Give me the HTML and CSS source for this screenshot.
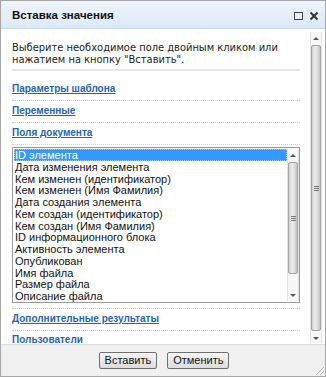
FILE: index.html
```html
<!DOCTYPE html>
<html lang="ru">
<head>
    <meta charset="UTF-8">
    <meta name="viewport" content="width=device-width, initial-scale=1.0">
    <title>Вставка значения</title>
    <link rel="stylesheet" href="styles.css">
</head>
<body>

    <div class="dialog">
        <!-- Title bar -->
        <div class="titlebar">
            <span class="title">Вставка значения</span>
            <span class="tools">
                <svg width="10" height="10" viewBox="0 0 10 10"><rect x="1.5" y="1.5" width="8" height="7" fill="none" stroke="#444" stroke-width="1"/></svg>
                <svg width="10" height="10" viewBox="0 0 10 10"><path d="M1.5 1.5 L8.5 8.5 M8.5 1.5 L1.5 8.5" stroke="#333" stroke-width="2"/></svg>
            </span>
        </div>

        <div class="body">
            <div class="content">
                <p class="hint">Выберите необходимое поле двойным кликом или нажатием на кнопку "Вставить".</p>
                <div class="rule"></div>

                <div class="section"><a href="#">Параметры шаблона</a></div>
                <div class="section"><a href="#">Переменные</a></div>
                <div class="section"><a href="#">Поля документа</a></div>

                <!-- Field list -->
                <div class="list-wrap">
                    <div class="listbox">
                        <ul class="items">
                            <li class="selected">ID элемента</li>
                            <li>Дата изменения элемента</li>
                            <li>Кем изменен (идентификатор)</li>
                            <li>Кем изменен (Имя Фамилия)</li>
                            <li>Дата создания элемента</li>
                            <li>Кем создан (идентификатор)</li>
                            <li>Кем создан (Имя Фамилия)</li>
                            <li>ID информационного блока</li>
                            <li>Активность элемента</li>
                            <li>Опубликован</li>
                            <li>Имя файла</li>
                            <li>Размер файла</li>
                            <li>Описание файла</li>
                        </ul>
                        <div class="scrollbar inner">
                            <div class="arrow up"></div>
                            <div class="thumb" style="height: 110px;"><span class="grip"></span></div>
                            <div class="track"></div>
                            <div class="arrow down"></div>
                        </div>
                    </div>
                </div>

                <div class="section"><a href="#">Дополнительные результаты</a></div>
                <div class="section last"><a href="#">Пользователи</a></div>
            </div>

            <div class="scrollbar outer">
                <div class="arrow up"></div>
                <div class="thumb" style="height: 284px;"><span class="grip"></span></div>
                <div class="track"></div>
                <div class="arrow down"></div>
            </div>
        </div>

        <div class="footer">
            <button class="btn">Вставить</button>
            <button class="btn">Отменить</button>
            <span class="resize-grip"></span>
        </div>
    </div>

</body>
</html>
```

FILE: styles.css
```css
body {
    margin: 0;
    padding: 0;
    background-color: #fff;
    font-family: "DejaVu Sans Condensed", "DejaVu Sans", sans-serif;
    font-size: 11px;
    color: #222;
}
.dialog {
    width: 326px;
    height: 377px;
    box-sizing: border-box;
    border: 1px solid #a6a6a6;
    display: flex;
    flex-direction: column;
    overflow: hidden;
    background-color: #fff;
}
.titlebar {
    height: 27px;
    flex: none;
    display: flex;
    align-items: center;
    justify-content: space-between;
    padding: 0 6px 0 11px;
    background: linear-gradient(#eef5fc, #dbe9f7);
    border-bottom: 1px solid #c9d7e6;
}
.title {
    font-family: "Liberation Sans", Arial, sans-serif;
    font-weight: bold;
    font-size: 11.5px;
    color: #111;
}
.tools {
    display: flex;
    gap: 6px;
    padding-top: 2px;
}

/* Main area */
.body {
    flex: 1;
    display: flex;
    overflow: hidden;
}
.content {
    flex: 1;
    padding: 13px 10px 0 11px;
    overflow: hidden;
}
.hint {
    margin: 0;
    line-height: 12px;
}
.rule {
    height: 2px;
    margin-top: 3px;
    background-color: #e6e6e6;
}
.section {
    padding: 3px 0 5px;
    line-height: 13px;
    border-bottom: 1px dotted #c3cfdc;
}
.section.last {
    padding-top: 2px;
}
.rule + .section {
    margin-top: 8px;
}
.section a {
    font-family: "Liberation Sans", Arial, sans-serif;
    font-size: 10px;
    color: #1f65b7;
    font-weight: bold;
    text-decoration: underline;
}
.list-wrap {
    padding: 2px 0 5px;
    border-bottom: 1px dotted #c3cfdc;
}

/* Listbox */
.listbox {
    height: 156px;
    box-sizing: border-box;
    border: 1px solid #9a9a9a;
    display: flex;
    overflow: hidden;
}
.items {
    flex: 1;
    list-style: none;
    margin: 0;
    padding: 1px 0 0 1px;
    overflow: hidden;
    font-family: "Liberation Sans", Arial, sans-serif;
    font-size: 11px;
    color: #111;
}
.items li {
    height: 11.75px;
    line-height: 12px;
    padding-left: 1px;
    white-space: nowrap;
}
.items li.selected {
    background-color: #3399ff;
    color: #fff;
    outline: 1px dotted #9cc9f5;
    outline-offset: -1px;
}

/* Scrollbars */
.scrollbar {
    width: 12px;
    flex: none;
    display: flex;
    flex-direction: column;
    background-color: #f7f7f7;
    border-left: 1px solid #e2e2e2;
    border-right: 1px solid #e2e2e2;
    box-sizing: border-box;
}
.scrollbar.outer {
    margin: 3px 3px 1px 0;
}
.scrollbar.inner {
    margin: 1px 0;
}
.arrow {
    height: 12px;
    flex: none;
    display: flex;
    align-items: center;
    justify-content: center;
}
.arrow::after {
    content: "";
    border-left: 3px solid transparent;
    border-right: 3px solid transparent;
}
.arrow.up::after {
    border-bottom: 3px solid #555;
}
.arrow.down::after {
    border-top: 3px solid #555;
}
.thumb {
    flex: none;
    margin: 1px 0;
    border: 1px solid #a5a5a5;
    border-radius: 2px;
    background: linear-gradient(to right, #d0d0d0, #ececec 40%, #e2e2e2 60%, #c4c4c4);
    display: flex;
    align-items: center;
    justify-content: center;
}
.grip {
    width: 5px;
    height: 5px;
    background: repeating-linear-gradient(#777 0 1px, transparent 1px 2px);
}
.track {
    flex: 1;
}

/* Footer */
.footer {
    height: 31px;
    flex: none;
    position: relative;
    display: flex;
    align-items: center;
    justify-content: center;
    gap: 10px;
    background-color: #f0f0f0;
    border-top: 1px solid #dedede;
    padding-left: 2px;
}
.btn {
    height: 17px;
    padding: 0 5px;
    font-family: "Liberation Sans", Arial, sans-serif;
    font-size: 11px;
    line-height: 13px;
    color: #111;
    border: 1px solid #707070;
    border-radius: 2px;
    background: linear-gradient(#f6f6f6, #dcdcdc);
    cursor: pointer;
}
.resize-grip {
    position: absolute;
    right: 1px;
    bottom: 1px;
    width: 10px;
    height: 10px;
    background: repeating-linear-gradient(135deg, transparent 0 2px, #b5b5b5 2px 3px);
    clip-path: polygon(100% 0, 100% 100%, 0 100%);
}
```
